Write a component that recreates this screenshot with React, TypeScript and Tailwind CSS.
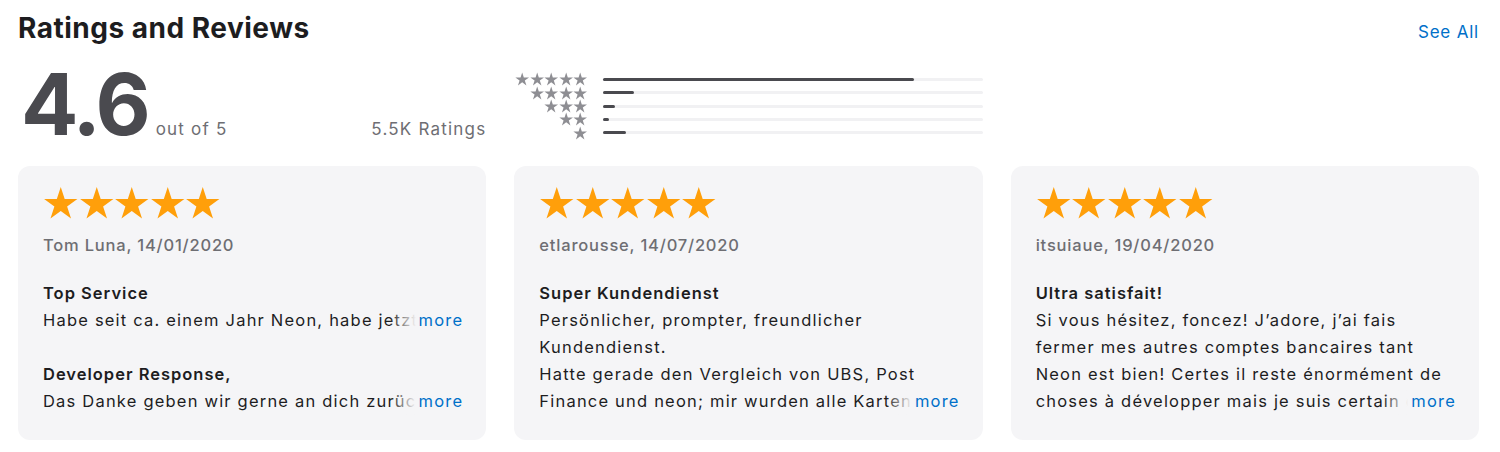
import React from "react";

type Review = {
  author: string;
  date: string;
  blocks: { title: string; lines: string[] }[];
};

const reviews: Review[] = [
  {
    author: "Tom Luna",
    date: "14/01/2020",
    blocks: [
      {
        title: "Top Service",
        lines: ["Habe seit ca. einem Jahr Neon, habe jetzt einige Konten gekündigt"],
      },
      {
        title: "Developer Response,",
        lines: ["Das Danke geben wir gerne an dich zurück, lieber Tom"],
      },
    ],
  },
  {
    author: "etlarousse",
    date: "14/07/2020",
    blocks: [
      {
        title: "Super Kundendienst",
        lines: [
          "Persönlicher, prompter, freundlicher",
          "Kundendienst.",
          "Hatte gerade den Vergleich von UBS, Post",
          "Finance und neon; mir wurden alle Karten gesperrt",
        ],
      },
    ],
  },
  {
    author: "itsuiaue",
    date: "19/04/2020",
    blocks: [
      {
        title: "Ultra satisfait!",
        lines: [
          "Si vous hésitez, foncez! J’adore, j’ai fais",
          "fermer mes autres comptes bancaires tant",
          "Neon est bien! Certes il reste énormément de",
          "choses à développer mais je suis certain que ça viendra",
        ],
      },
    ],
  },
];

// share of each star row, 5 down to 1
const histogram = [82, 8, 3, 1.5, 6];

const Star = ({ className }: { className: string }) => (
  <svg viewBox="0 0 24 24" className={className} fill="currentColor">
    <polygon points="12,0.6 14.69,8.89 23.41,8.89 16.36,14.02 19.05,22.31 12,17.18 4.95,22.31 7.64,14.02 0.59,8.89 9.31,8.89" />
  </svg>
);

const ReviewCard = ({ review }: { review: Review }) => (
  <div className="rounded-[12px] bg-[#f5f5f7] pt-[20px] pr-[23px] pb-[25px] pl-[25px]">
    <div className="flex text-[#ff9f0a]">
      {[0, 1, 2, 3, 4].map((i) => (
        <Star key={i} className="h-[35px] w-[35.5px]" />
      ))}
    </div>
    <div className="mt-[12px] text-[16.5px] leading-[24px] font-medium tracking-[0.8px] text-[#6e6e73]">
      {review.author}, {review.date}
    </div>
    <div className="mt-[23px] flex flex-col gap-[27px] text-[16.5px] leading-[27px] tracking-[1.2px] text-[#1d1d1f]">
      {review.blocks.map((block) => (
        <div key={block.title}>
          <div className="font-semibold tracking-[1px]">{block.title}</div>
          {block.lines.map((line, i) =>
            i === block.lines.length - 1 ? (
              <div key={i} className="relative overflow-hidden whitespace-nowrap">
                {line}
                <div className="absolute top-0 right-0 flex">
                  <div className="w-[26px] bg-linear-to-r from-[#f5f5f700] to-[#f5f5f7]" />
                  <span className="bg-[#f5f5f7] pl-[3px] text-[#0070c9]">more</span>
                </div>
              </div>
            ) : (
              <div key={i} className="whitespace-nowrap">
                {line}
              </div>
            )
          )}
        </div>
      ))}
    </div>
  </div>
);

export default function App() {
  return (
    <div className="min-h-[452px] bg-white pr-[21px] pl-[18px] font-['Inter',sans-serif] antialiased">
      <div className="flex h-[28px] items-baseline justify-between mt-[14px]">
        <h2 className="text-[28px] leading-[28px] font-bold tracking-[0.5px] text-[#1d1d1f]">
          Ratings and Reviews
        </h2>
        <a className="text-[17px] leading-[20px] tracking-[0.8px] text-[#0070c9]">See All</a>
      </div>

      <div className="mt-[20px] grid grid-cols-3 gap-[28px]">
        <div className="flex items-baseline justify-between">
          <div className="flex items-baseline">
            <span className="pl-[3px] text-[85px] leading-[85px] font-bold tracking-[-3px] text-[#4a4a4f]">
              4.6
            </span>
            <span className="ml-[8px] text-[17px] leading-[20px] tracking-[1.2px] text-[#6e6e73]">
              out of 5
            </span>
          </div>
          <span className="text-[17px] leading-[20px] tracking-[1.2px] text-[#6e6e73]">5.5K Ratings</span>
        </div>
        <div className="flex flex-col pt-[11px]">
          {histogram.map((pct, row) => (
            <div key={row} className="flex h-[13.3px] items-center">
              <div className="flex w-[73px] justify-end text-[#8e8e93]">
                {Array.from({ length: 5 - row }).map((_, i) => (
                  <Star key={i} className="h-[14.5px] w-[14.4px]" />
                ))}
              </div>
              <div className="ml-[16px] h-[3px] flex-1 rounded-full bg-[#f1f1f3]">
                <div className="h-[3px] rounded-full bg-[#4a4a4f]" style={{ width: `${pct}%` }} />
              </div>
            </div>
          ))}
        </div>
        <div />
      </div>

      <div className="mt-[19px] grid grid-cols-3 gap-[28px]">
        {reviews.map((r) => (
          <ReviewCard key={r.author} review={r} />
        ))}
      </div>
    </div>
  );
}
